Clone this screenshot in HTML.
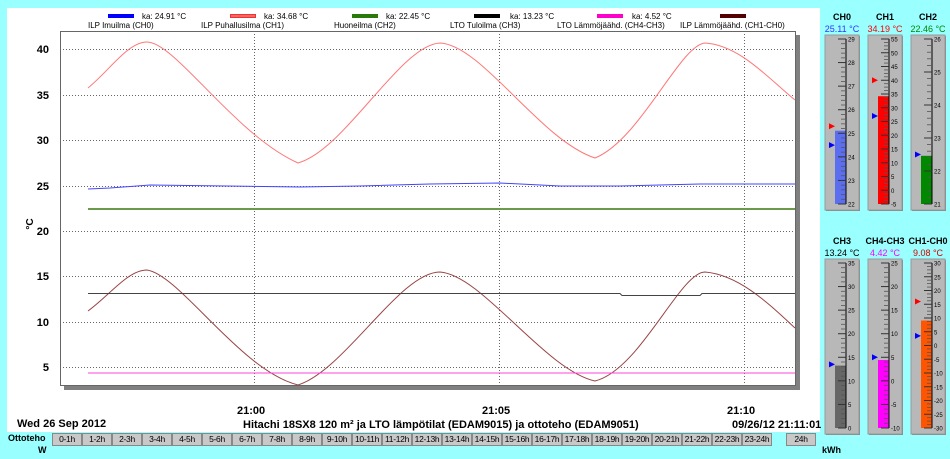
<!DOCTYPE html>
<html><head><meta charset="utf-8">
<style>
body{margin:0;width:950px;height:459px;background:#9ff;overflow:hidden;font-family:"Liberation Sans",sans-serif;position:relative}
.a{position:absolute;white-space:nowrap}
.b{font-weight:bold;font-size:11px}
.btn{position:absolute;top:433px;height:11px;width:28px;background:#c8c8c8;border:1px solid #888;font-size:8.5px;letter-spacing:-0.3px;text-align:center;line-height:11px;white-space:nowrap;overflow:hidden}
</style></head><body>
<div class="a" style="left:7px;top:8px;width:813px;height:424px;background:#fff"></div>
<svg class="a" style="left:0;top:0" width="950" height="459" id="s">
<g font-family="Liberation Sans" font-size="8">
<rect x="108" y="14" width="26" height="4" fill="#00f"/><text x="142" y="19">ka: 24.91 °C</text>
<rect x="230" y="14" width="26" height="4" fill="#e33"/><rect x="231" y="15" width="24" height="2" fill="#f66"/><text x="264" y="19">ka: 34.68 °C</text>
<rect x="352" y="14" width="26" height="4" fill="#2a7a0a"/><text x="386" y="19">ka: 22.45 °C</text>
<rect x="474" y="14" width="26" height="4" fill="#000"/><text x="510" y="19">ka: 13.23 °C</text>
<rect x="597" y="14" width="26" height="4" fill="#f0c"/><text x="632" y="19">ka: 4.52 °C</text>
<rect x="720" y="14" width="26" height="4" fill="#500"/>
<text x="88" y="28">ILP Imuilma (CH0)</text>
<text x="201" y="28">ILP Puhallusilma (CH1)</text>
<text x="334" y="28">Huoneilma (CH2)</text>
<text x="450" y="28">LTO Tuloilma (CH3)</text>
<text x="557" y="28">LTO Lämmöjäähd. (CH4-CH3)</text>
<text x="680" y="28">ILP Lämmöjäähd. (CH1-CH0)</text>
</g>
<rect x="64" y="35" width="736" height="355" fill="#808080"/>
<rect x="60.5" y="31.5" width="735" height="354" fill="#fff" stroke="#666" stroke-width="1"/>
<g stroke="#666" stroke-dasharray="1,2" stroke-width="1">
<line x1="60" x2="796" y1="49.5" y2="49.5"/><line x1="60" x2="796" y1="95.5" y2="95.5"/>
<line x1="60" x2="796" y1="140.5" y2="140.5"/><line x1="60" x2="796" y1="186.5" y2="186.5"/>
<line x1="60" x2="796" y1="231.5" y2="231.5"/><line x1="60" x2="796" y1="276.5" y2="276.5"/>
<line x1="60" x2="796" y1="322.5" y2="322.5"/><line x1="60" x2="796" y1="367.5" y2="367.5"/>
<line y1="31" y2="386" x1="254.5" x2="254.5"/><line y1="31" y2="386" x1="499.5" x2="499.5"/><line y1="31" y2="386" x1="744.5" x2="744.5"/>
</g>
<g font-weight="bold" font-size="11" text-anchor="end" font-family="Liberation Sans">
<text x="49" y="53">40</text><text x="49" y="99">35</text><text x="49" y="144">30</text><text x="49" y="190">25</text>
<text x="49" y="235">20</text><text x="49" y="280">15</text><text x="49" y="326">10</text><text x="49" y="371">5</text>
</g>
<text transform="translate(33,224) rotate(-90)" font-weight="bold" font-size="10" text-anchor="middle">°C</text>
<path d="M88,88 C110,70 128,42 147,42 C175,42 235,135 298,163 C345,150 400,45 440,43 C482,45 540,140 595,158 C640,140 680,45 705,43 C740,45 770,80 795,100" fill="none" stroke="#f77" stroke-width="1"/>
<path d="M88,311 C110,295 128,270 147,270 C180,275 240,370 298,385 C345,370 400,272 440,272 C482,275 545,370 595,381 C640,370 680,272 705,272 C740,275 770,305 795,328" fill="none" stroke="#944" stroke-width="1"/>
<path d="M88,189 L110,188 L150,185 L300,187 L360,186 L430,184 L500,183 L560,186 L620,186 L700,184 L795,184" fill="none" stroke="#44f"/>
<line x1="88" x2="795" y1="209" y2="209" stroke="#6a9a4a" stroke-width="2"/>
<path d="M88,293.5 L620,293.5 L622,295.5 L700,295.5 L702,293.5 L795,293.5" fill="none" stroke="#444"/>
<line x1="88" x2="795" y1="373" y2="373" stroke="#f4d"/>
</svg>
<div class="a b" style="left:237px;top:405px">21:00</div>
<div class="a b" style="left:482px;top:405px">21:05</div>
<div class="a b" style="left:727px;top:405px">21:10</div>
<div class="a b" style="left:17px;top:418px">Wed 26 Sep 2012</div>
<div class="a b" style="left:243px;top:419px">Hitachi 18SX8 120 m² ja LTO lämpötilat (EDAM9015) ja ottoteho (EDAM9051)</div>
<div class="a b" style="left:732px;top:419px">09/26/12 21:11:01</div>
<div class="a" style="left:8px;top:433px;font-size:9px;font-weight:bold">Ottoteho</div>
<div class="a" style="left:38px;top:445px;font-size:9px;font-weight:bold">W</div>
<div class="a" style="left:822px;top:445px;font-size:9px;font-weight:bold">kWh</div>
<div id="btns"></div>
<div class="btn" style="left:786px">24h</div>
<svg class="a" style="left:0;top:0" width="950" height="459" id="t"></svg>
<script>
var b='';for(var i=0;i<24;i++)b+='<div class="btn" style="left:'+(52+i*30)+'px">'+i+'-'+(i+1)+'h</div>';
document.getElementById('btns').innerHTML=b;
var th=[
["CH0","25.11 °C","#33f",825,17,22,29,1,25.11,"#5b6ef0",25.3,24.5,5],
["CH1","34.19 °C","#f00",868,17,-5,55,5,34.19,"#f00",40,27,4],
["CH2","22.46 °C","#080",911,17,21,26,1,22.46,"#080",null,22.5,5],
["CH3","13.24 °C","#000",825,241,0,35,5,13.24,"#666",null,13.5,5],
["CH4-CH3","4.42 °C","#f0f",868,241,-10,25,5,4.42,"#f0f",null,5,5],
["CH1-CH0","9.08 °C","#d00",911,241,-30,30,5,9.08,"#f50",16,3.5,4]];
var s='';
th.forEach(function(t){
var x=t[3],ly=t[4],top=ly+22,bot=top+165,y0=ly+18,h=175;
s+='<text x="'+(x+17)+'" y="'+(ly+3)+'" font-size="9" font-weight="bold" text-anchor="middle">'+t[0]+'</text>';
s+='<text x="'+(x+17)+'" y="'+(ly+15)+'" font-size="9" fill="'+t[2]+'" text-anchor="middle">'+t[1]+'</text>';
s+='<rect x="'+(x+1)+'" y="'+(y0+1)+'" width="34" height="'+h+'" fill="#888"/>';
s+='<rect x="'+x+'" y="'+y0+'" width="34" height="'+h+'" fill="#b8b8b8" stroke="#999"/>';
function Y(v){return top+(t[6]-v)/(t[6]-t[5])*165;}
var fy=Y(t[8]);
s+='<rect x="'+(x+10)+'" y="'+fy+'" width="11" height="'+(bot-fy)+'" fill="'+t[9]+'"/>';
s+='<line x1="'+(x+21)+'" x2="'+(x+21)+'" y1="'+top+'" y2="'+bot+'" stroke="#000"/>';
var st=t[7],n=(t[6]-t[5])/st,sub=t[12];
for(var k=0;k<=n;k++){var v=t[5]+k*st,yy=Y(v);
s+='<line x1="'+(x+13)+'" x2="'+(x+21)+'" y1="'+yy+'" y2="'+yy+'" stroke="#333"/>';
s+='<text x="'+(x+23)+'" y="'+(yy+2.5)+'" font-size="6">'+v+'</text>';
if(k<n)for(var m=1;m<sub;m++){var y2=Y(v+st*m/sub);s+='<line x1="'+(x+16)+'" x2="'+(x+20)+'" y1="'+y2+'" y2="'+y2+'" stroke="#555" stroke-width="0.8"/>';}}
if(t[10]!=null){var r=Y(t[10]);s+='<polygon points="'+(x+4)+','+(r-3)+' '+(x+10)+','+r+' '+(x+4)+','+(r+3)+'" fill="#f00"/>';}
var bl=Y(t[11]);s+='<polygon points="'+(x+4)+','+(bl-3)+' '+(x+10)+','+bl+' '+(x+4)+','+(bl+3)+'" fill="#00f"/>';
});
document.getElementById('t').innerHTML=s;
</script>
</body></html>
